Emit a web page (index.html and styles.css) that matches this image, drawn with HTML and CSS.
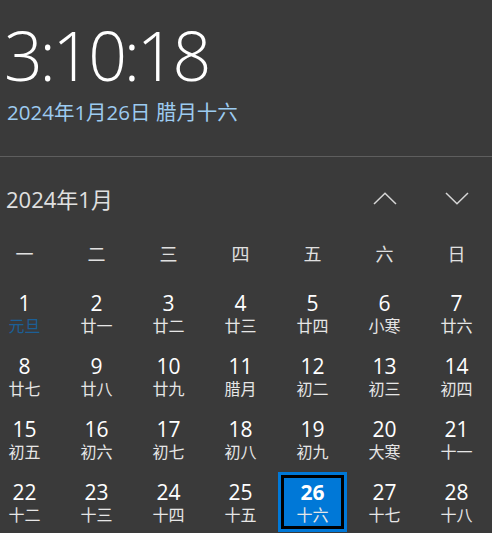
FILE: index.html
```html
<!DOCTYPE html>
<html lang="zh-CN">
<head>
<meta charset="utf-8">
<link rel="stylesheet" href="styles.css">
</head>
<body>
<div class="flyout">
  <section class="clock">
    <div class="time">3:10:18</div>
    <div class="date">2024年1月26日 腊月十六</div>
  </section>
  <hr class="divider">
  <section class="calendar">
    <div class="month-bar">
      <span class="month-title">2024年1月</span>
      <div class="nav">
        <button class="nav-btn" aria-label="上一月">
          <svg width="24" height="13" viewBox="0 0 24 13"><polyline points="1,12 12,1.2 23,12" fill="none" stroke="#d6d6d6" stroke-width="1.5"/></svg>
        </button>
        <button class="nav-btn" aria-label="下一月">
          <svg width="24" height="13" viewBox="0 0 24 13"><polyline points="1,1 12,11.8 23,1" fill="none" stroke="#d6d6d6" stroke-width="1.5"/></svg>
        </button>
      </div>
    </div>
    <div class="grid weekdays">
      <span>一</span><span>二</span><span>三</span><span>四</span><span>五</span><span>六</span><span>日</span>
    </div>
    <div class="grid days">
      <div class="day"><span class="num">1</span><span class="lunar holiday">元旦</span></div>
      <div class="day"><span class="num">2</span><span class="lunar">廿一</span></div>
      <div class="day"><span class="num">3</span><span class="lunar">廿二</span></div>
      <div class="day"><span class="num">4</span><span class="lunar">廿三</span></div>
      <div class="day"><span class="num">5</span><span class="lunar">廿四</span></div>
      <div class="day"><span class="num">6</span><span class="lunar">小寒</span></div>
      <div class="day"><span class="num">7</span><span class="lunar">廿六</span></div>
      <div class="day"><span class="num">8</span><span class="lunar">廿七</span></div>
      <div class="day"><span class="num">9</span><span class="lunar">廿八</span></div>
      <div class="day"><span class="num">10</span><span class="lunar">廿九</span></div>
      <div class="day"><span class="num">11</span><span class="lunar">腊月</span></div>
      <div class="day"><span class="num">12</span><span class="lunar">初二</span></div>
      <div class="day"><span class="num">13</span><span class="lunar">初三</span></div>
      <div class="day"><span class="num">14</span><span class="lunar">初四</span></div>
      <div class="day"><span class="num">15</span><span class="lunar">初五</span></div>
      <div class="day"><span class="num">16</span><span class="lunar">初六</span></div>
      <div class="day"><span class="num">17</span><span class="lunar">初七</span></div>
      <div class="day"><span class="num">18</span><span class="lunar">初八</span></div>
      <div class="day"><span class="num">19</span><span class="lunar">初九</span></div>
      <div class="day"><span class="num">20</span><span class="lunar">大寒</span></div>
      <div class="day"><span class="num">21</span><span class="lunar">十一</span></div>
      <div class="day"><span class="num">22</span><span class="lunar">十二</span></div>
      <div class="day"><span class="num">23</span><span class="lunar">十三</span></div>
      <div class="day"><span class="num">24</span><span class="lunar">十四</span></div>
      <div class="day"><span class="num">25</span><span class="lunar">十五</span></div>
      <div class="day today"><span class="num">26</span><span class="lunar">十六</span></div>
      <div class="day"><span class="num">27</span><span class="lunar">十七</span></div>
      <div class="day"><span class="num">28</span><span class="lunar">十八</span></div>
    </div>
  </section>
</div>
</body>
</html>
```

FILE: styles.css
```css
html, body {
  margin: 0;
  padding: 0;
}

body {
  width: 492px;
  height: 533px;
  overflow: hidden;
  background: #3a3a3a;
  font-family: "Open Sans", "Noto Sans CJK SC", sans-serif;
  color: #ffffff;
}

.flyout {
  width: 492px;
  height: 533px;
}

.clock {
  padding: 21px 0 0 4px;
  height: 135px;
  box-sizing: border-box;
}

.time {
  font-size: 68px;
  font-weight: 300;
  line-height: 68px;
  letter-spacing: -3.2px;
  color: #ffffff;
}

.date {
  margin-top: 10px;
  padding-left: 3px;
  font-size: 20.5px;
  line-height: 26px;
  color: #9dcbf0;
}

.divider {
  margin: 21px 0 0 0;
  border: none;
  border-top: 1px solid #5e5e5e;
  height: 0;
}

.month-bar {
  display: flex;
  align-items: center;
  justify-content: space-between;
  height: 40px;
  margin-top: 21px;
  padding-left: 6px;
}

.month-title {
  font-size: 22px;
  color: #e0e0e0;
}

.nav {
  display: flex;
  gap: 48px;
  padding-right: 23px;
}

.nav-btn {
  background: none;
  border: none;
  padding: 0;
  display: flex;
  width: 24px;
  height: 13px;
}

.grid {
  display: grid;
  grid-template-columns: repeat(7, 69px);
  column-gap: 3px;
  margin-left: -10px;
}

.weekdays {
  margin-top: 16px;
  font-size: 18px;
  color: #e0e0e0;
  line-height: 40px;
}

.weekdays span {
  text-align: center;
}

.days {
  margin-top: 9px;
  row-gap: 3px;
}

.day {
  height: 60px;
  box-sizing: border-box;
  display: flex;
  flex-direction: column;
  align-items: center;
  padding-top: 8px;
}

.num {
  font-size: 21px;
  line-height: 25px;
  color: #ffffff;
}

.lunar {
  margin-top: 1px;
  font-size: 16px;
  line-height: 18px;
  color: #e6e6e6;
}

.lunar.holiday {
  color: #1c5f96;
}

.today {
  background: #0078d7;
  border: 3px solid #0078d7;
  box-shadow: inset 0 0 0 3px #000000;
  padding-top: 5px;
}

.today .num {
  font-weight: 700;
}
```
